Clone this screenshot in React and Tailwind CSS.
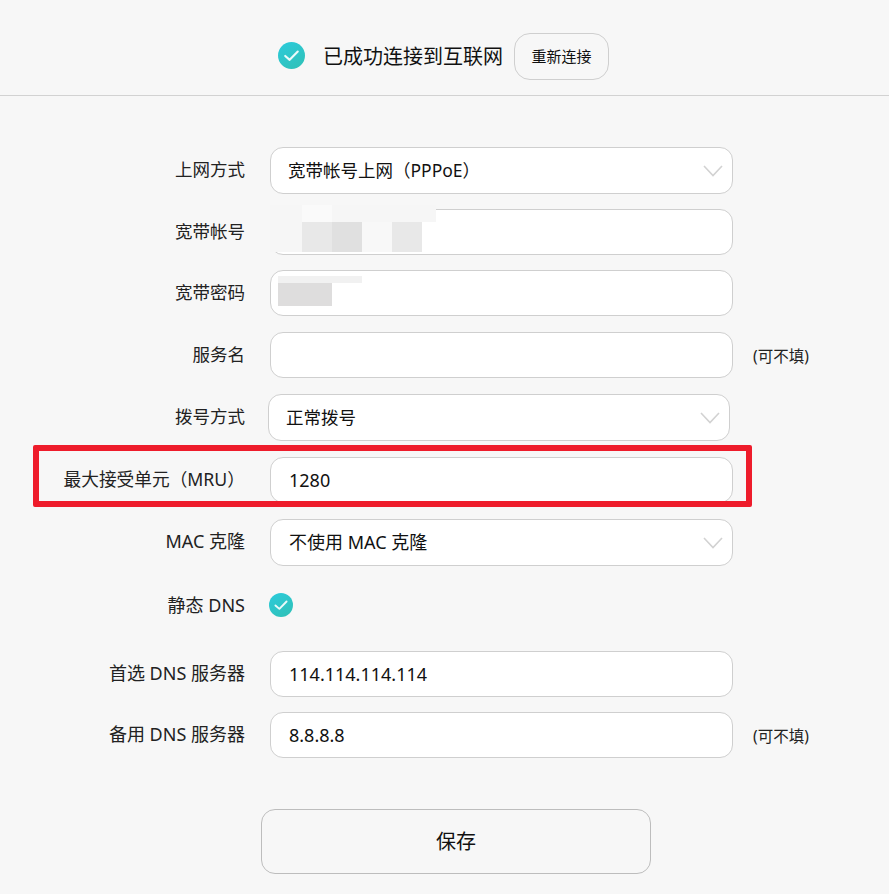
function Check({ className }) {
  return (
    <svg viewBox="0 0 28 28" className={className}>
      <defs>
        <linearGradient id="teal" x1="0" y1="0" x2="0.6" y2="1">
          <stop offset="0" stopColor="#2ccbdc" />
          <stop offset="1" stopColor="#2fc2bb" />
        </linearGradient>
      </defs>
      <circle cx="14" cy="14" r="14" fill="url(#teal)" />
      <path d="M7.5 14.5l4.6 4 8.4-8.6" fill="none" stroke="#eafafa" strokeWidth="2.2" strokeLinecap="round" strokeLinejoin="round" />
    </svg>
  )
}

function Chevron() {
  return (
    <svg viewBox="0 0 20 12" className="absolute right-[9px] top-[17px] w-[20px] h-[12px]">
      <path d="M1 1l9 9.5L19 1" fill="none" stroke="#d2d2d2" strokeWidth="1.6" />
    </svg>
  )
}

function Row({ label, value, select, hint, className = '', labelClass = 'text-[17.5px]', fieldClass = 'ml-[25px] w-[463px]', valueClass = 'pl-[18px] text-[18px]' }) {
  return (
    <div className={`flex items-center ${className}`}>
      <div className={`w-[245px] mb-[2px] text-right text-[#222] whitespace-nowrap ${labelClass}`}>{label}</div>
      <div className={`relative rounded-[13px] border border-[#cfcfcf] bg-white flex items-center text-[#111] ${select ? 'h-[47px]' : 'h-[46px]'} ${fieldClass} ${valueClass}`}>
        {value}
        {select && <Chevron />}
      </div>
      {hint && <span className="ml-[20px] mt-[4px] text-[15.5px] text-[#222]">(可不填)</span>}
    </div>
  )
}

export default function App() {
  return (
    <div className="relative h-[894px] w-[889px] overflow-hidden bg-[#f7f7f7] font-['Noto_Sans','Noto_Sans_CJK_SC',sans-serif]">
      <header className="h-[96px] border-b border-[#d2d2d2] flex items-start pl-[278px] pt-[33px]">
        <Check className="w-[27px] h-[27px] mt-[9px]" />
        <span className="ml-[18px] mt-[9px] text-[20px] leading-[30px] text-[#111]">已成功连接到互联网</span>
        <button className="ml-[11px] w-[95px] h-[47px] rounded-[16px] border border-[#cfcfcf] text-[15px] text-[#111]">重新连接</button>
      </header>

      <main className="pt-[51px]">
        <Row label="上网方式" value="宽带帐号上网（PPPoE）" select valueClass="pl-[17px] pb-[1px] text-[17.5px]" />
        <Row label="宽带帐号" className="mt-[15px]" />
        <Row label="宽带密码" className="mt-[15px]" />
        <Row label="服务名" className="mt-[16px]" hint />
        <Row label="拨号方式" value="正常拨号" select className="mt-[16px]" fieldClass="ml-[23px] w-[462px]" valueClass="pl-[17px] text-[17.5px]" />
        <Row label="最大接受单元（MRU）" value="1280" className="mt-[16px]" labelClass="text-[17.7px]" />
        <Row label="MAC 克隆" value="不使用 MAC 克隆" select className="mt-[16px]" labelClass="text-[18px]" />
        <div className="flex items-center mt-[27px] h-[24px]">
          <div className="w-[245px] text-right text-[18px] text-[#222]">静态 DNS</div>
          <Check className="ml-[24px] w-[24px] h-[24px]" />
        </div>
        <Row label="首选 DNS 服务器" value="114.114.114.114" className="mt-[34px]" labelClass="text-[18px]" />
        <Row label="备用 DNS 服务器" value="8.8.8.8" className="mt-[15px]" labelClass="text-[18px]" hint />
        <button className="block ml-[261px] mt-[51px] w-[390px] h-[65px] rounded-[14px] border border-[#bdbdbd] text-[20px] text-[#111]">保存</button>
      </main>

      {/* 打码的账号和密码 */}
      <div className="absolute left-[270px] top-[205px] w-[166px] h-[17px] bg-[#f6f6f6]" />
      <div className="absolute left-[302px] top-[205px] w-[30px] h-[17px] bg-[#fafafa]" />
      <div className="absolute left-[270px] top-[222px] flex h-[30px]">
        <div className="w-[32px] bg-[#f6f6f6]" />
        <div className="w-[30px] bg-[#e8e8e8]" />
        <div className="w-[30px] bg-[#e0e0e0]" />
        <div className="w-[30px] bg-[#f8f8f8]" />
        <div className="w-[30px] bg-[#e8e8e8]" />
      </div>
      <div className="absolute left-[278px] top-[276px] w-[84px] h-[7px] bg-[#f1f1f1]" />
      <div className="absolute left-[278px] top-[283px] w-[54px] h-[23px] bg-[#dedddd]" />

      {/* 红框标注 */}
      <div className="absolute left-[33px] top-[445px] w-[719px] h-[62px] border-[6px] border-[#ee1c2b] rounded-[2px]" />
    </div>
  )
}
